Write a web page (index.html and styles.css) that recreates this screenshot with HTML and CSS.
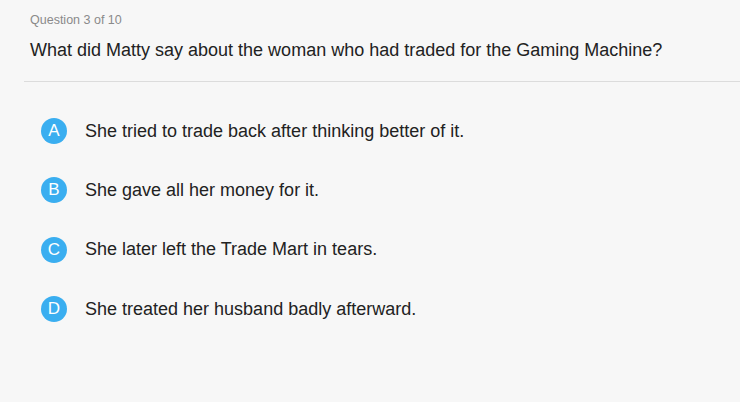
FILE: index.html
```html
<!DOCTYPE html>
<html>
<head>
<meta charset="utf-8">
<link rel="stylesheet" href="styles.css">
</head>
<body>
<div class="quiz">
  <div class="header">
    <div class="counter">Question 3 of 10</div>
    <div class="question">What did Matty say about the woman who had traded for the Gaming Machine?</div>
  </div>
  <div class="options">
    <div class="option"><span class="badge">A</span><span class="text">She tried to trade back after thinking better of it.</span></div>
    <div class="option"><span class="badge">B</span><span class="text">She gave all her money for it.</span></div>
    <div class="option"><span class="badge">C</span><span class="text">She later left the Trade Mart in tears.</span></div>
    <div class="option"><span class="badge">D</span><span class="text">She treated her husband badly afterward.</span></div>
  </div>
</div>
</body>
</html>
```
FILE: styles.css
```css
html, body {
  margin: 0;
  padding: 0;
  background: #f7f7f7;
  font-family: "Liberation Sans", Arial, sans-serif;
}
.quiz {
  width: 740px;
  height: 402px;
  overflow: hidden;
}
.header {
  margin-left: 24px;
  padding: 12px 0 19px 6px;
  border-bottom: 1px solid #dcdcdc;
}
.counter {
  font-size: 12.5px;
  line-height: 16px;
  color: #8a8a8a;
}
.question {
  margin-top: 10px;
  font-size: 18px;
  line-height: 24px;
  color: #222;
}
.options {
  padding: 36px 0 0 41px;
  display: flex;
  flex-direction: column;
  gap: 33.4px;
}
.option {
  display: flex;
  align-items: center;
  height: 26px;
}
.badge {
  width: 26px;
  height: 26px;
  border-radius: 50%;
  background: #3aaef0;
  color: #fff;
  font-size: 17px;
  display: flex;
  align-items: center;
  justify-content: center;
  flex-shrink: 0;
}
.text {
  margin-left: 18px;
  font-size: 18px;
  color: #222;
}
```
